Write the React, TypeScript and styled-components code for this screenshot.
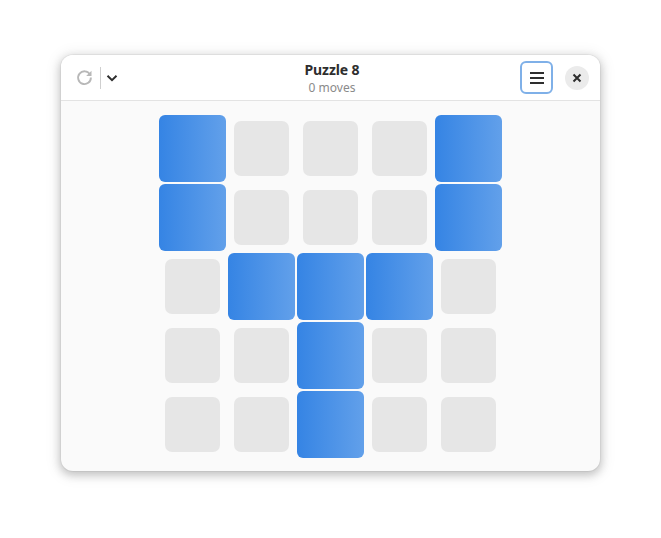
import React from 'react';
import styled, { createGlobalStyle } from 'styled-components';

const GlobalStyle = createGlobalStyle`
  html, body {
    margin: 0;
    padding: 0;
    background: #ffffff;
  }
  body {
    font-family: 'Noto Sans', 'Open Sans', sans-serif;
  }
`;

const Page = styled.div`
  width: 661px;
  height: 538px;
  padding: 55px 0 0 61px;
  box-sizing: border-box;
`;

const Window = styled.div`
  width: 539px;
  height: 416px;
  border-radius: 12px;
  background: #fafafa;
  overflow: hidden;
  display: flex;
  flex-direction: column;
  box-shadow: 0 0 0 1px rgba(0, 0, 0, 0.04), 0 3px 9px 1px rgba(0, 0, 0, 0.2),
    0 2px 14px 5px rgba(0, 0, 0, 0.06);
`;

const HeaderBar = styled.div`
  height: 46px;
  flex-shrink: 0;
  background: #ffffff;
  border-bottom: 1px solid #e3e3e3;
  box-sizing: border-box;
  display: grid;
  grid-template-columns: 1fr auto 1fr;
  align-items: center;
  padding: 0 11px 0 14px;
`;

const Side = styled.div<{ $end?: boolean }>`
  display: flex;
  align-items: center;
  justify-content: ${(p) => (p.$end ? 'flex-end' : 'flex-start')};
  gap: ${(p) => (p.$end ? '12px' : '0')};
`;

const IconButton = styled.div<{ $muted?: boolean }>`
  width: 18px;
  height: 18px;
  display: flex;
  align-items: center;
  justify-content: center;
  color: ${(p) => (p.$muted ? '#b8b8b8' : '#2e2e2e')};
`;

const Separator = styled.div`
  width: 1px;
  height: 22px;
  background: #cfcfcf;
  margin: 0 2px 0 7px;
`;

const TitleBlock = styled.div`
  display: flex;
  flex-direction: column;
  align-items: center;
  line-height: 1;
`;

const Title = styled.div`
  font-size: 14px;
  font-weight: 700;
  color: #2e2e2e;
  margin-top: 1px;
  letter-spacing: -0.1px;
`;

const Subtitle = styled.div`
  font-size: 12px;
  color: #8a8a8a;
  margin-top: 5px;
`;

const MenuButton = styled.div`
  width: 33px;
  height: 33px;
  box-sizing: border-box;
  border: 2px solid #7fb0e8;
  border-radius: 6px;
  display: flex;
  align-items: center;
  justify-content: center;
  color: #2e2e2e;
`;

const CloseButton = styled.div`
  width: 24px;
  height: 24px;
  border-radius: 50%;
  background: #ebebeb;
  display: flex;
  align-items: center;
  justify-content: center;
  color: #2e2e2e;
`;

const Board = styled.div`
  flex: 1;
  display: flex;
  justify-content: center;
  padding-top: 13px;
`;

const Grid = styled.div`
  display: grid;
  grid-template-columns: repeat(5, 69px);
  grid-auto-rows: 69px;
`;

const Cell = styled.div`
  display: flex;
  align-items: center;
  justify-content: center;
`;

const Tile = styled.div<{ $filled: boolean }>`
  width: ${(p) => (p.$filled ? '67px' : '55px')};
  height: ${(p) => (p.$filled ? '67px' : '55px')};
  border-radius: ${(p) => (p.$filled ? '6px' : '7px')};
  background: ${(p) =>
    p.$filled ? 'linear-gradient(90deg, #3584e4 0%, #62a0ea 100%)' : '#e6e6e6'};
`;

const pattern = [
  [1, 0, 0, 0, 1],
  [1, 0, 0, 0, 1],
  [0, 1, 1, 1, 0],
  [0, 0, 1, 0, 0],
  [0, 0, 1, 0, 0],
];

const RefreshIcon = () => (
  <svg width="17" height="17" viewBox="0 0 16 16" fill="none">
    <path
      d="M13.2 5.2A6 6 0 1 0 14 8"
      stroke="currentColor"
      strokeWidth="1.8"
      strokeLinecap="butt"
    />
    <path d="M14.6 1.6v5h-5z" fill="currentColor" />
  </svg>
);

const ChevronIcon = () => (
  <svg width="12" height="8" viewBox="0 0 12 8" fill="none">
    <path d="M1.5 1.8L6 6.2l4.5-4.4" stroke="currentColor" strokeWidth="2" />
  </svg>
);

const MenuIcon = () => (
  <svg width="14" height="12" viewBox="0 0 14 12" fill="currentColor">
    <rect x="0" y="0" width="14" height="2" />
    <rect x="0" y="5" width="14" height="2" />
    <rect x="0" y="10" width="14" height="2" />
  </svg>
);

const CloseIcon = () => (
  <svg width="10" height="10" viewBox="0 0 10 10" fill="none">
    <path d="M1.5 1.5l7 7M8.5 1.5l-7 7" stroke="currentColor" strokeWidth="2" />
  </svg>
);

export default function App() {
  return (
    <>
      <GlobalStyle />
      <Page>
        <Window>
          <HeaderBar>
            <Side>
              <IconButton $muted>
                <RefreshIcon />
              </IconButton>
              <Separator />
              <IconButton>
                <ChevronIcon />
              </IconButton>
            </Side>
            <TitleBlock>
              <Title>Puzzle 8</Title>
              <Subtitle>0 moves</Subtitle>
            </TitleBlock>
            <Side $end>
              <MenuButton>
                <MenuIcon />
              </MenuButton>
              <CloseButton>
                <CloseIcon />
              </CloseButton>
            </Side>
          </HeaderBar>
          <Board>
            <Grid>
              {pattern.flat().map((v, i) => (
                <Cell key={i}>
                  <Tile $filled={v === 1} />
                </Cell>
              ))}
            </Grid>
          </Board>
        </Window>
      </Page>
    </>
  );
}
